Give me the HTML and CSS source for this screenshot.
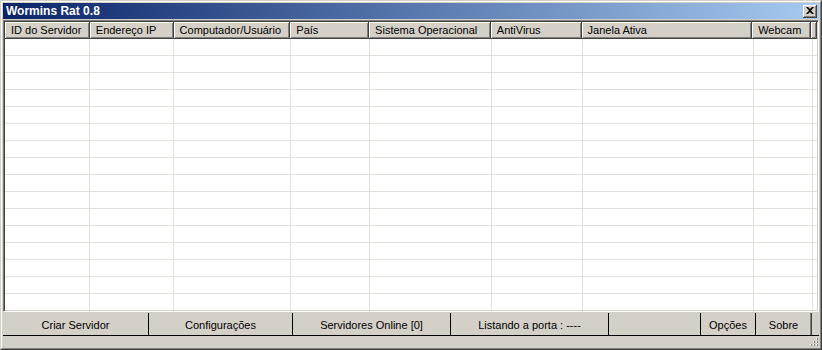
FILE: index.html
```html
<!DOCTYPE html>
<html>
<head>
<meta charset="utf-8">
<link rel="stylesheet" href="styles.css">
</head>
<body>
<div class="window">
  <div class="frame">
    <div class="titlebar">
      <span class="title">Wormins Rat 0.8</span>
      <span class="close"><svg width="8" height="7" viewBox="0 0 8 7"><path d="M0 0h2l2 2 2-2h2L5 3.5 8 7H6L4 5 2 7H0l3-3.5z" fill="#000"/></svg></span>
    </div>
    <div class="list">
      <div class="header">
        <div class="hcell c1">ID do Servidor</div>
        <div class="hcell c2">Endereço IP</div>
        <div class="hcell c3">Computador/Usuário</div>
        <div class="hcell c4">País</div>
        <div class="hcell c5">Sistema Operacional</div>
        <div class="hcell c6">AntiVirus</div>
        <div class="hcell c7">Janela Ativa</div>
        <div class="hcell c8">Webcam</div>
        <div class="hcell rest"></div>
      </div>
      <div class="body">
        <div class="cols">
          <div class="col c1"></div><div class="col c2"></div><div class="col c3"></div><div class="col c4"></div><div class="col c5"></div><div class="col c6"></div><div class="col c7"></div><div class="col c8"></div>
        </div>
      </div>
    </div>
    <div class="buttons">
      <div class="btn b1">Criar Servidor</div>
      <div class="btn b2">Configurações</div>
      <div class="btn b3">Servidores Online [0]</div>
      <div class="btn b4">Listando a porta : ----</div>
      <div class="btn b5"></div>
      <div class="btn b6">Opções</div>
      <div class="btn b7">Sobre</div>
    </div>
    <div class="status">
      <svg class="grip" width="11" height="11" viewBox="0 0 11 11">
        <g fill="#fff"><rect x="8" y="2" width="1" height="1"/><rect x="5" y="5" width="1" height="1"/><rect x="8" y="5" width="1" height="1"/><rect x="2" y="8" width="1" height="1"/><rect x="5" y="8" width="1" height="1"/><rect x="8" y="8" width="1" height="1"/></g>
        <g fill="#808080"><rect x="9" y="3" width="1" height="1"/><rect x="9" y="2" width="1" height="1"/><rect x="6" y="6" width="1" height="1"/><rect x="6" y="5" width="1" height="1"/><rect x="9" y="6" width="1" height="1"/><rect x="9" y="5" width="1" height="1"/><rect x="3" y="9" width="1" height="1"/><rect x="3" y="8" width="1" height="1"/><rect x="6" y="9" width="1" height="1"/><rect x="6" y="8" width="1" height="1"/><rect x="9" y="9" width="1" height="1"/><rect x="9" y="8" width="1" height="1"/></g>
      </svg>
    </div>
  </div>
</div>
</body>
</html>
```
FILE: styles.css
```css
html, body { margin: 0; padding: 0; background: #d4d0c8; }
body { font-family: "Liberation Sans", Arial, sans-serif; font-size: 11px; color: #000; }
.window {
  width: 822px; height: 350px; box-sizing: border-box;
  border-top: 1px solid #d4d0c8; border-left: 1px solid #d4d0c8;
  border-right: 1px solid #404040; border-bottom: 1px solid #404040;
}
.frame {
  height: 100%; box-sizing: border-box;
  border-top: 1px solid #fff; border-left: 1px solid #fff;
  border-right: 1px solid #808080; border-bottom: 1px solid #808080;
  padding: 1px; display: flex; flex-direction: column;
}
.titlebar {
  height: 16px; flex: none; display: flex; align-items: center; justify-content: space-between;
  background: linear-gradient(to right, #0a246a, #a6caf0);
  padding: 0 2px 0 3px;
}
.title { color: #fff; font-weight: bold; font-size: 12px; letter-spacing: 0; }
.close {
  width: 14px; height: 13px; box-sizing: border-box; background: #d4d0c8;
  display: flex; align-items: center; justify-content: center;
  box-shadow: inset -1px -1px #404040, inset 1px 1px #fff, inset -2px -2px #808080;
}
.close svg { display: block; margin-top: -1px; margin-left: -1px; }
.list {
  margin-top: 1px; flex: none; height: 292px; box-sizing: border-box;
  border-top: 1px solid #808080; border-left: 1px solid #808080;
  border-right: 1px solid #fff; border-bottom: 1px solid #fff;
  box-shadow: inset 1px 1px #404040, inset -1px -1px #d4d0c8;
  padding: 1px; display: flex; flex-direction: column; background: #fff;
}
.header { display: flex; height: 17px; flex: none; }
.hcell {
  box-sizing: border-box; height: 17px; background: #d4d0c8; padding: 2px 0 0 6px; white-space: nowrap;
  box-shadow: inset -1px -1px #404040, inset 1px 1px #fff, inset -2px -2px #808080;
}
.c1 { width: 85px; } .c2 { width: 84px; } .c3 { width: 117px; } .c4 { width: 79px; }
.c5 { width: 122px; } .c6 { width: 91px; } .c7 { width: 171px; } .c8 { width: 59px; }
.hcell.rest { flex: 1; }
.body {
  flex: 1;
  background: repeating-linear-gradient(to bottom, #fff 0 16px, #e2e0db 16px 17px);
}
.cols { display: flex; height: 100%; }
.col { box-sizing: border-box; border-right: 1px solid #e2e0db; height: 100%; }
.buttons { display: flex; height: 22px; flex: none; margin-top: 1px; border-bottom: 1px solid #000; }
.btn { box-sizing: border-box; display: flex; align-items: center; justify-content: center; border-right: 1px solid #000; padding-top: 1px; }
.b1 { width: 146px; } .b2 { width: 144px; } .b3 { width: 158px; } .b4 { width: 158px; }
.b5 { width: 92px; } .b6 { width: 55px; } .b7 { width: 56px; border-right: 1px solid #404040; box-shadow: inset -1px 0 #808080; }
.status { flex: 1; position: relative; }
.grip { position: absolute; right: 0; bottom: 0; }
```
